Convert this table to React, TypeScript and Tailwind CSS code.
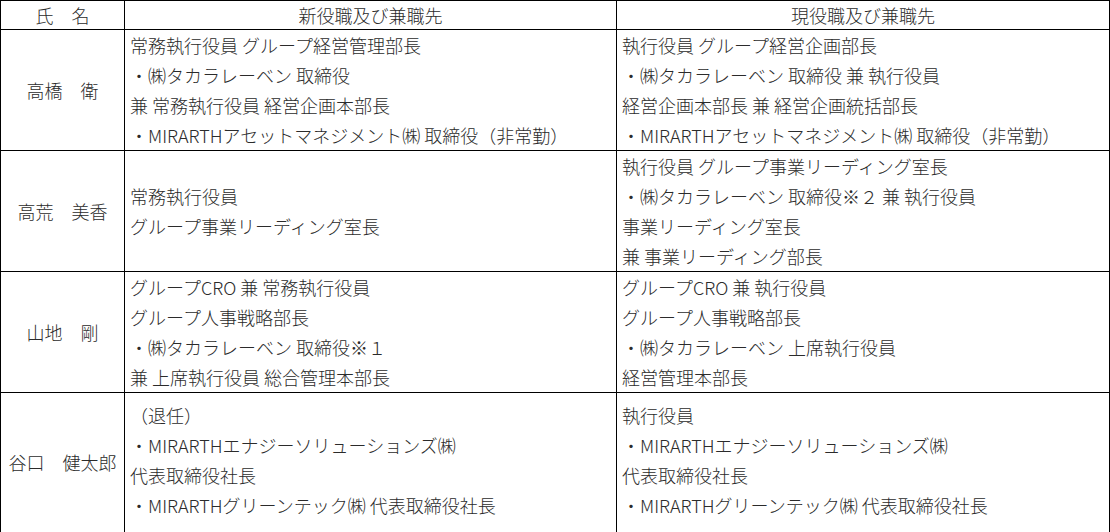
import React from 'react';

interface Row {
  name: string;
  next: string[];
  current: string[];
  tall?: boolean;
}

const rows: Row[] = [
  {
    name: '高橋　衛',
    next: [
      '常務執行役員 グループ経営管理部長',
      '・㈱タカラレーベン 取締役',
      '兼 常務執行役員 経営企画本部長',
      '・MIRARTHアセットマネジメント㈱ 取締役（非常勤）',
    ],
    current: [
      '執行役員 グループ経営企画部長',
      '・㈱タカラレーベン 取締役 兼 執行役員',
      '経営企画本部長 兼 経営企画統括部長',
      '・MIRARTHアセットマネジメント㈱ 取締役（非常勤）',
    ],
  },
  {
    name: '高荒　美香',
    next: ['常務執行役員', 'グループ事業リーディング室長'],
    current: [
      '執行役員 グループ事業リーディング室長',
      '・㈱タカラレーベン 取締役※２ 兼 執行役員',
      '事業リーディング室長',
      '兼 事業リーディング部長',
    ],
  },
  {
    name: '山地　剛',
    next: [
      'グループCRO 兼 常務執行役員',
      'グループ人事戦略部長',
      '・㈱タカラレーベン 取締役※１',
      '兼 上席執行役員 総合管理本部長',
    ],
    current: [
      'グループCRO 兼 執行役員',
      'グループ人事戦略部長',
      '・㈱タカラレーベン 上席執行役員',
      '経営管理本部長',
    ],
  },
  {
    name: '谷口　健太郎',
    next: [
      '（退任）',
      '・MIRARTHエナジーソリューションズ㈱',
      '代表取締役社長',
      '・MIRARTHグリーンテック㈱ 代表取締役社長',
    ],
    current: [
      '執行役員',
      '・MIRARTHエナジーソリューションズ㈱',
      '代表取締役社長',
      '・MIRARTHグリーンテック㈱ 代表取締役社長',
    ],
    tall: true,
  },
];

const Lines: React.FC<{ lines: string[] }> = ({ lines }) => (
  <div className="flex flex-col">
    {lines.map((l, i) => (
      <div key={i} className="h-[30px] leading-[30px] whitespace-nowrap">
        {l}
      </div>
    ))}
  </div>
);

export default function App() {
  return (
    <div
      className="bg-white text-[#2b2b2b] text-[18px] font-light w-[1110px] h-[532px]"
      style={{ fontFamily: '"Noto Sans CJK JP", "Noto Sans", sans-serif' }}
    >
      <table className="border-collapse w-[1109px] table-fixed">
        <colgroup>
          <col className="w-[124px]" />
          <col className="w-[492px]" />
          <col className="w-[493px]" />
        </colgroup>
        <thead>
          <tr className="h-[29px]">
            <th className="border border-black font-light text-center p-0 leading-[28px]">氏　名</th>
            <th className="border border-black font-light text-center p-0 leading-[28px]">新役職及び兼職先</th>
            <th className="border border-black font-light text-center p-0 leading-[28px]">現役職及び兼職先</th>
          </tr>
        </thead>
        <tbody>
          {rows.map((r, i) => (
            <tr key={i} className={r.tall ? 'h-[140px]' : 'h-[120px]'}>
              <td className="border border-black text-center align-middle p-0 whitespace-nowrap">{r.name}</td>
              <td className={`border border-black align-middle pl-[5px] pt-0 ${r.tall ? 'pb-[5px]' : 'pb-0'}`}>
                <Lines lines={r.next} />
              </td>
              <td className={`border border-black align-middle pl-[5px] pt-0 ${r.tall ? 'pb-[5px]' : 'pb-0'}`}>
                <Lines lines={r.current} />
              </td>
            </tr>
          ))}
        </tbody>
      </table>
    </div>
  );
}
